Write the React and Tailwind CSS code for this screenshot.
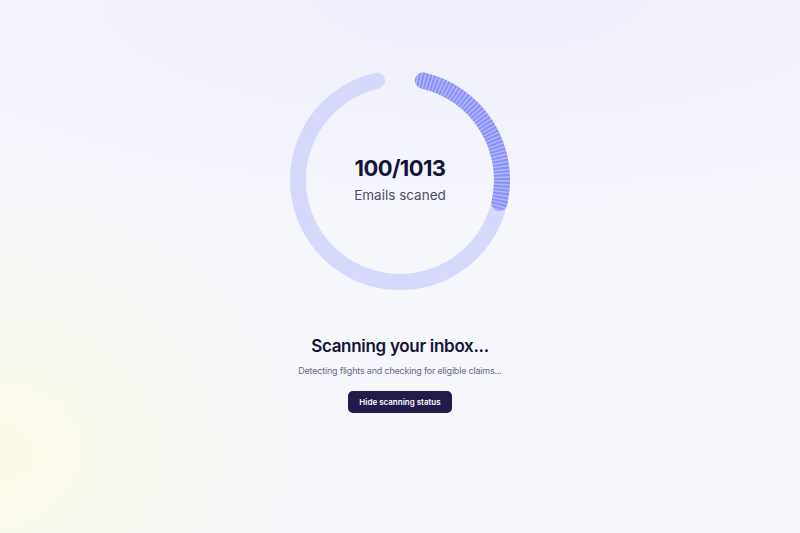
import React from 'react'

const font = { fontFamily: '"Inter", "Noto Sans", sans-serif' }

function ScanRing() {
  return (
    <div className="relative w-[220px] h-[220px]">
      <svg width="220" height="220" viewBox="0 0 220 220" className="absolute inset-0">
        <defs>
          <mask id="progress-mask">
            <path
              d="M 132.95 10.61 A 102 102 0 0 1 209.39 132.95"
              fill="none"
              stroke="white"
              strokeWidth="16"
              strokeLinecap="round"
            />
          </mask>
        </defs>
        {/* track */}
        <path
          d="M 132.95 10.61 A 102 102 0 1 1 87.05 10.61"
          fill="none"
          stroke="#d7d9fc"
          strokeWidth="16"
          strokeLinecap="round"
        />
        {/* striped progress */}
        <g mask="url(#progress-mask)">
          <path
            d="M 124.2 8.99 A 102 102 0 0 1 207.01 141.52"
            fill="none"
            stroke="#b1b5fb"
            strokeWidth="20"
          />
          <path
            d="M 124.2 8.99 A 102 102 0 0 1 207.01 141.52"
            fill="none"
            stroke="#8990f6"
            strokeWidth="20"
            strokeDasharray="2 1.6"
          />
        </g>
      </svg>
      <div className="absolute inset-0 flex flex-col items-center justify-center pb-[2px]">
        <div className="text-[22px] leading-[26px] font-bold text-[#16133a] tracking-[-0.6px]">100/1013</div>
        <div className="mt-[5px] text-[13.5px] leading-[18px] text-[#4d4b68]">Emails scaned</div>
      </div>
    </div>
  )
}

export default function App() {
  return (
    <div
      style={font}
      className="w-full min-h-[533px] h-[533px] overflow-hidden bg-[#f6f6fd] bg-[radial-gradient(ellipse_340px_300px_at_0%_85%,#fbfae8_0%,rgba(251,250,232,0)_100%),radial-gradient(ellipse_700px_220px_at_60%_0%,#efeffc_0%,rgba(239,239,252,0)_100%)]"
    >
      <div className="flex flex-col items-center pt-[70px]">
        <ScanRing />
        <h1 className="mt-[45px] text-[17px] leading-[22px] font-semibold text-[#16133a] tracking-[-0.3px]">
          Scanning your inbox...
        </h1>
        <p className="mt-[7px] text-[9px] leading-[14px] text-[#6b6a84] tracking-[-0.2px]">
          Detecting flights and checking for eligible claims...
        </p>
        <button
          type="button"
          className="mt-[13px] h-[22px] px-[11px] rounded-[5px] bg-[#231b4b] text-white text-[8px] font-semibold"
        >
          Hide scanning status
        </button>
      </div>
    </div>
  )
}
